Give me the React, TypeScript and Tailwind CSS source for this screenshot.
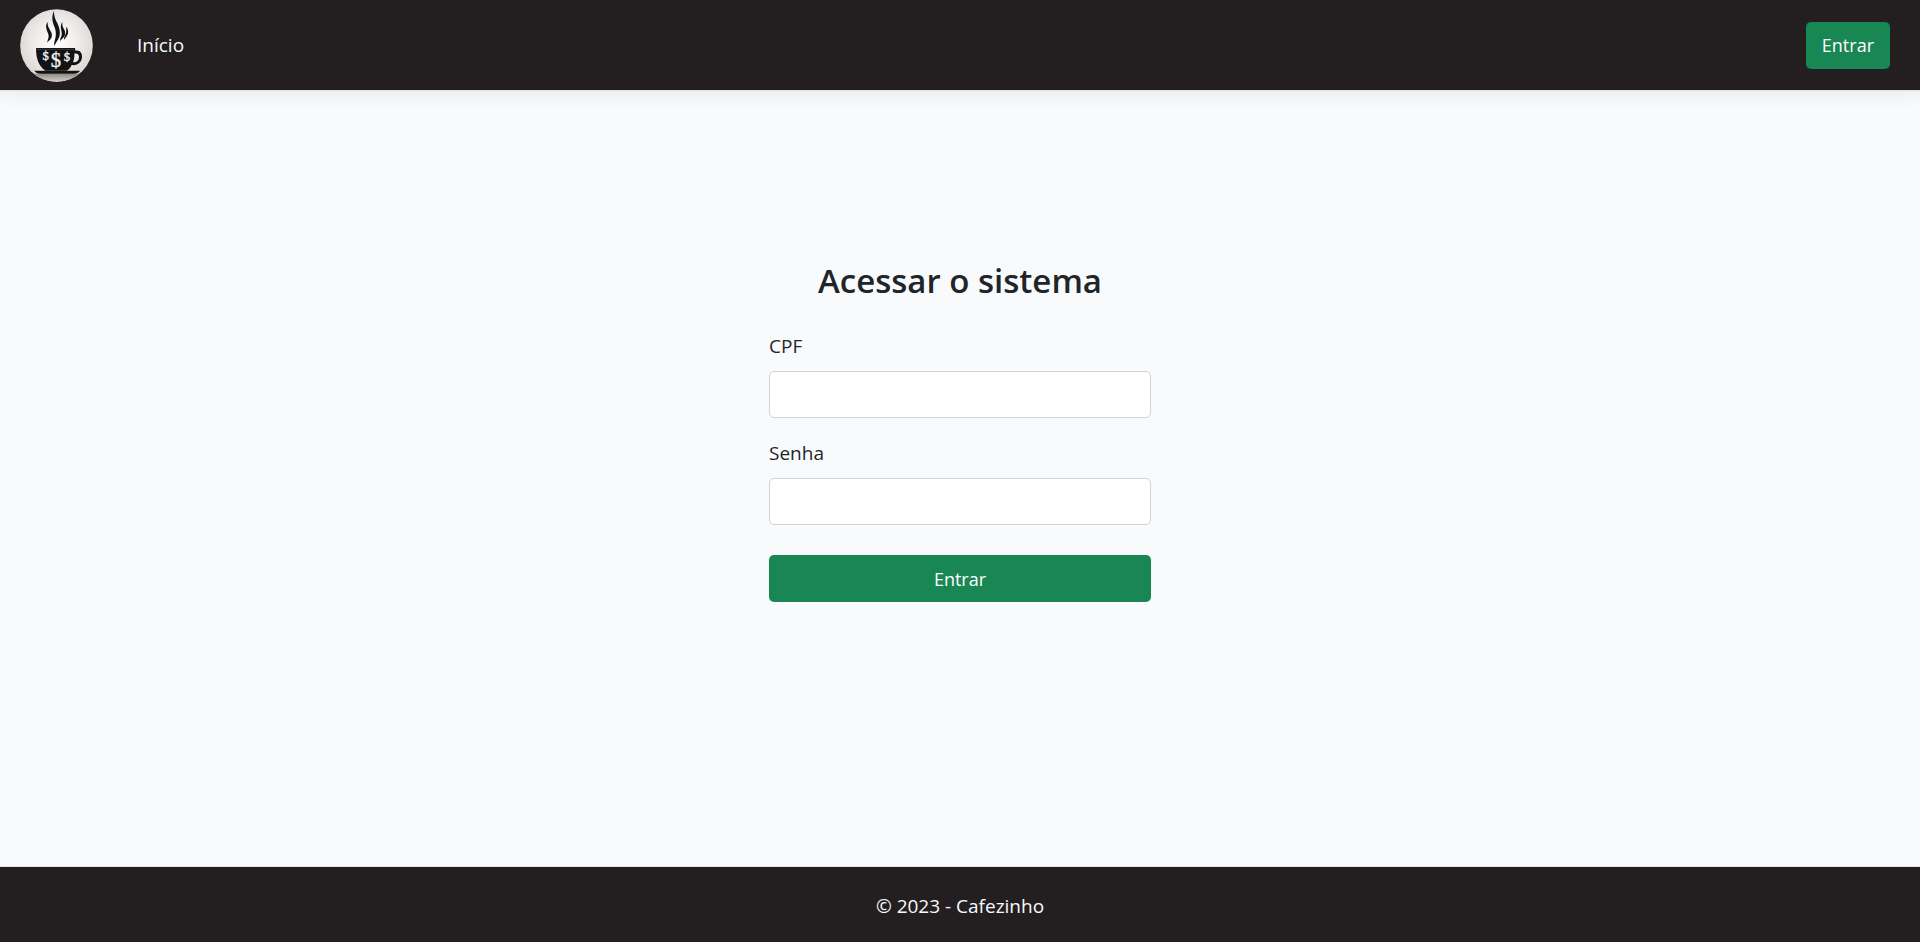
import type { InputHTMLAttributes } from "react";

function Logo() {
  return (
    <svg viewBox="60 26 219 219" className="size-[73px]" role="img" aria-label="Cafezinho">
      <defs>
        <radialGradient id="plate" cx="50%" cy="46%" r="54%">
          <stop offset="0" stopColor="#ffffff" />
          <stop offset="0.5" stopColor="#f1efed" />
          <stop offset="1" stopColor="#dcd7d3" />
        </radialGradient>
        <linearGradient id="table" x1="0" y1="0" x2="0" y2="1">
          <stop offset="0" stopColor="#8f8985" />
          <stop offset="1" stopColor="#d6d1ce" />
        </linearGradient>
        <clipPath id="disc">
          <circle cx="169.500" cy="135.500" r="109" />
        </clipPath>
      </defs>
      <circle cx="169.500" cy="135.500" r="109" fill="url(#plate)" />
      <g clipPath="url(#disc)">
        <rect x="60" y="220" width="219" height="25" fill="url(#table)" />
      </g>
      <g fill="#121315">
        <path d="M162 31C162 50 167 58 173 70C181 88 182 104 175 116C171 124 166 129 163 137C161 127 165 119 167 109C169 95 166 86 161 74C155 57 156 43 162 31z" />
        <path d="M143 65C142 76 146 82 150 89C157 99 158 108 152 116C149 120 145 122 142 127C142 119 146 115 146 108C146 100 142 95 140 88C137 78 138 71 143 65z" />
        <path d="M187 65C186 74 188 80 192 86C197 95 197 104 191 111C187 116 183 118 180 123C180 114 184 110 185 104C186 97 184 92 183 85C182 76 183 70 187 65z" />
        <path d="M199 79C206 88 206 98 201 106C198 111 194 114 192 119C191 112 195 107 197 101C200 94 198 88 199 79z" />
        <path d="M108 143h117l1 8c13-3 21 6 20 20-1 15-13 26-31 23-4 9-8 13-15 17h-64c-18-12-28-33-28-68zm115 17c1 9-1 17-4 26 10 1 17-5 18-14 1-9-5-14-14-12z" fillRule="evenodd" />
        <path d="M103 211h137c-3 6-10 9-19 9h-99c-9 0-16-3-19-9z" />
      </g>
      <path d="M108 147h114" stroke="#4a4a4b" strokeWidth="2" />
      <g
        fill="#f1f1f1"
        stroke="#f1f1f1"
        strokeWidth="1"
        textAnchor="middle"
        fontFamily="Liberation Serif, serif"
      >
        <text x="137" y="178" fontSize="38">$</text>
        <text x="168" y="199" fontSize="62">$</text>
        <text x="201" y="183" fontSize="38">$</text>
      </g>
    </svg>
  );
}

type FieldProps = InputHTMLAttributes<HTMLInputElement> & { id: string; label: string };

function Field({ id, label, ...input }: FieldProps) {
  return (
    <div>
      <label htmlFor={id} className="mb-[9px] block leading-8">
        {label}
      </label>
      <input
        id={id}
        name={id}
        className="block h-[47px] w-full rounded-[5px] border border-[#ced4da] bg-white px-4 outline-none focus:border-[#198754]"
        {...input}
      />
    </div>
  );
}

export default function App() {
  return (
    <div className="flex min-h-screen flex-col bg-[#f8fafc] font-['Open_Sans','Noto_Sans',sans-serif] text-[19px] text-[#212529]">
      <header className="flex items-center justify-between border-b border-[#dee2e6] bg-[#231f20] pt-[9px] pr-[30px] pb-2 pl-5 shadow-[0_2px_20px_rgba(0,0,0,0.08)]">
        <nav className="flex items-center gap-11">
          <a href="#inicio">
            <Logo />
          </a>
          <a href="#inicio" className="text-[#f8fafc]">
            Início
          </a>
        </nav>
        <a href="#entrar" className="flex h-[47px] items-center rounded-[5px] bg-[#198754] px-4 text-[18px] text-white">
          Entrar
        </a>
      </header>

      <main className="flex grow flex-col items-center px-4 pt-[169px]">
        <form className="w-full max-w-[382px]" onSubmit={(event) => event.preventDefault()}>
          <h1 className="mb-7 text-center text-[33px] leading-[42px] font-semibold">Acessar o sistema</h1>
          <div className="flex flex-col gap-[19px]">
            <Field id="cpf" label="CPF" type="text" />
            <Field id="senha" label="Senha" type="password" />
          </div>
          <button type="submit" className="mt-[30px] h-[47px] w-full rounded-[5px] bg-[#198754] pt-0.5 text-[18px] text-white">
            Entrar
          </button>
        </form>
      </main>

      <footer className="border-t border-[#dee2e6] bg-[#231f20] pt-6 pb-5 text-center leading-[31px] text-[#f8fafc]">
        © 2023 - Cafezinho
      </footer>
    </div>
  );
}
